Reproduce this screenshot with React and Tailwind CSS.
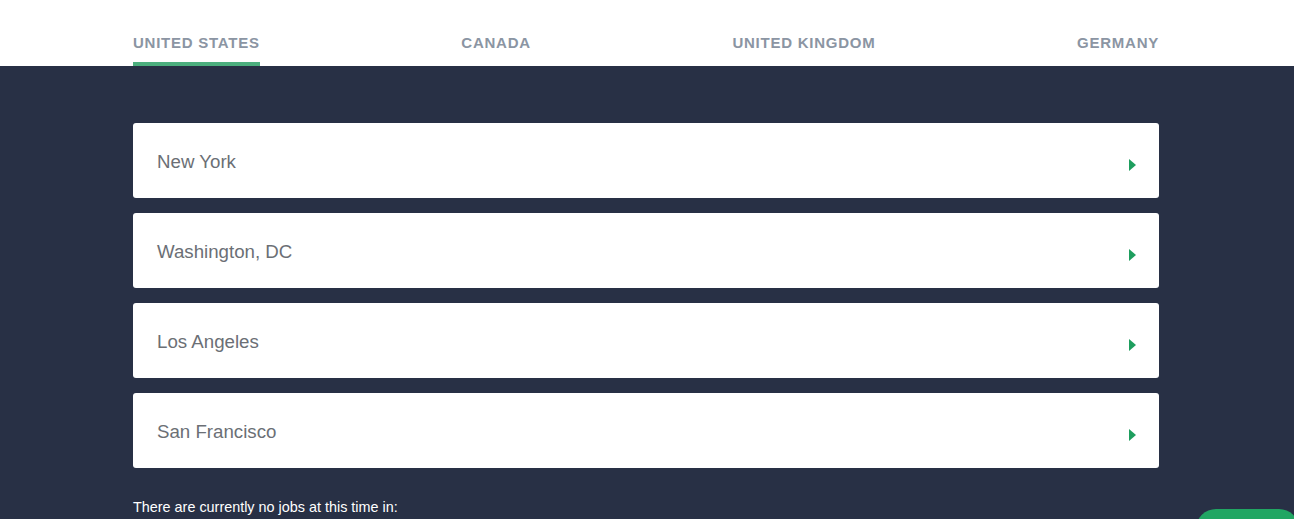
export default function App() {
  const tabs = ["UNITED STATES", "CANADA", "UNITED KINGDOM", "GERMANY"];
  const cities = ["New York", "Washington, DC", "Los Angeles", "San Francisco"];
  const font = { fontFamily: '"Liberation Sans", Arial, sans-serif' };
  return (
    <div className="relative w-[1294px] min-h-[519px] bg-white overflow-hidden" style={font}>
      <div className="h-[66px] bg-white px-[133px] w-[1292px]">
        <div className="flex justify-between w-[1026px]">
          {tabs.map((t, i) => (
            <div key={t} className="flex flex-col pt-[34px]">
              <span className="text-[15px] leading-[18px] font-bold tracking-[0.75px] text-[#8b95a3] whitespace-nowrap">
                {t}
              </span>
              <div className={`mt-[10px] h-[4px] ${i === 0 ? "bg-[#4caf7e]" : "bg-transparent"}`} />
            </div>
          ))}
        </div>
      </div>
      <div className="bg-[#283045] pt-[57px] pb-[40px] px-[133px]">
        <div className="w-[1026px] flex flex-col gap-[15px]">
          {cities.map((c) => (
            <div key={c} className="h-[75px] bg-white rounded-[3px] flex items-center justify-between pl-[24px] pr-[23px]">
              <span className="text-[18.7px] leading-[24px] mt-[2px] text-[#6b6f75]">{c}</span>
              <svg width="7" height="12" viewBox="0 0 7 12" className="mt-[8px]">
                <polygon points="0,0 7,6 0,12" fill="#1e9e5e" />
              </svg>
            </div>
          ))}
        </div>
        <p className="mt-[29px] text-[14.4px] leading-[20px] text-white">
          There are currently no jobs at this time in:
        </p>
        <div className="h-[40px]" />
      </div>
      <div className="absolute left-[1196px] top-[509px] w-[103px] h-[40px] rounded-[20px] bg-[#21a663]" />
    </div>
  );
}
